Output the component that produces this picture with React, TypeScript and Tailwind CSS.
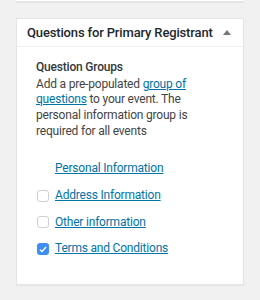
export default function App() {
  const groups = [
    { name: "Personal Information", box: false, checked: false },
    { name: "Address Information", box: true, checked: false },
    { name: "Other information", box: true, checked: false },
    { name: "Terms and Conditions", box: true, checked: true },
  ];

  return (
    <div className="w-[260px] h-[300px] bg-[#f1f1f1] overflow-hidden font-['Roboto',Arial,sans-serif] text-[#23282d]">
      <div className="mx-4 h-[2px] bg-white shadow-[0_1px_1px_rgba(0,0,0,0.06)] border-b border-[#e5e5e5]" />
      <div className="mx-4 mt-4 bg-white border border-[#e5e5e5] shadow-[0_1px_1px_rgba(0,0,0,0.04)]">
        <div className="flex items-center justify-between h-[28px] pl-[10px] pr-[12px] border-b border-[#eeeeee]">
          <h2 className="text-[13px] font-medium tracking-[-0.15px] leading-none whitespace-nowrap text-[#23282d]">Questions for Primary Registrant</h2>
          <svg width="8" height="5" viewBox="0 0 8 5" className="flex-none">
            <path d="M4 0 L8 5 L0 5 Z" fill="#72777c" />
          </svg>
        </div>
        <div className="pl-[19px] pr-3 pt-[13px] pb-[26px] text-[12px] tracking-[-0.2px] leading-[15.7px]">
          <div className="font-medium text-[#32373c]">Question Groups</div>
          <p className="mt-[1px] w-[154px] text-[#444]">
            Add a pre-populated{" "}
            <a href="#" className="text-[#0073aa] underline">group of questions</a>{" "}
            to your event. The personal information group is required for all events
          </p>
          <ul className="mt-[21px] flex flex-col gap-[9.7px]">
            {groups.map((g) => (
              <li key={g.name} className="flex items-center h-[17px]">
                <span className="w-[19px] flex-none">
                  {g.box && (
                    <span
                      className={
                        g.checked
                          ? "flex items-center justify-center w-[12px] h-[12px] ml-[1px] rounded-[3px] bg-[#3d8ff6]"
                          : "block w-[12px] h-[12px] ml-[1px] rounded-[3px] border border-[#d0d0d0] bg-white"
                      }
                    >
                      {g.checked && (
                        <svg width="8" height="7" viewBox="0 0 8 7">
                          <path d="M1 3.8 L3 5.6 L7 1" stroke="white" strokeWidth="1.4" fill="none" />
                        </svg>
                      )}
                    </span>
                  )}
                </span>
                <a href="#" className="text-[#0073aa] underline">{g.name}</a>
              </li>
            ))}
          </ul>
        </div>
      </div>
    </div>
  );
}
